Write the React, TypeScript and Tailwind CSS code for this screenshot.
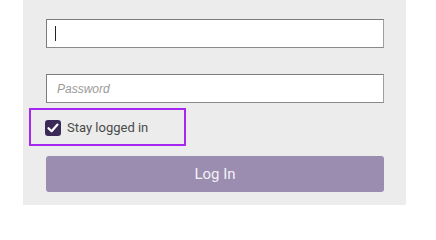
export default function App() {
  return (
    <div className="flex h-[205px] w-[436px] bg-white">
      <div className="ml-[23px] flex h-full w-[383px] flex-col bg-[#ececec] pl-[23px] pt-[19px]">
        {/* username, focused */}
        <div className="flex h-[29px] w-[338px] items-center border border-[#7c7c7c] border-r-[#a0a0a0] border-b-[#8a8a8a] bg-white pl-[8px]">
          <span className="h-[15px] w-px bg-[#222]" />
        </div>

        <div className="mt-[26px] flex h-[29px] w-[338px] items-center border border-[#7c7c7c] border-r-[#a0a0a0] border-b-[#8a8a8a] bg-white pl-[10px]">
          <span className="text-[12px] italic text-[#9a9a9a] [font-family:'Liberation_Sans',Arial,sans-serif]">
            Password
          </span>
        </div>

        {/* highlighted remember-me row */}
        <div className="-ml-[17px] mt-[5px] flex h-[38px] w-[157px] items-start gap-[6px] border-2 border-[#a626f2] pl-[14px] pt-[10px]">
          <span className="flex h-[16px] w-[16px] items-center justify-center rounded-[3px] bg-[#3b2a58]">
            <svg viewBox="0 0 16 16" className="h-[16px] w-[16px]">
              <polyline
                points="3.5,8.2 6.6,11.2 12.5,4.6"
                fill="none"
                stroke="white"
                strokeWidth="2.2"
                strokeLinecap="round"
                strokeLinejoin="round"
              />
            </svg>
          </span>
          <span className="-mt-[1px] text-[13px] leading-[17px] text-[#4a4a4a] [font-family:Roboto,'Noto_Sans',sans-serif]">
            Stay logged in
          </span>
        </div>

        <button
          type="button"
          className="mt-[10px] flex h-[36px] w-[338px] items-center justify-center rounded-[3px] bg-[#9a8db0] text-[15px] text-[#f4f1f8] [font-family:Roboto,'Noto_Sans',sans-serif]"
        >
          Log In
        </button>
      </div>
    </div>
  );
}
